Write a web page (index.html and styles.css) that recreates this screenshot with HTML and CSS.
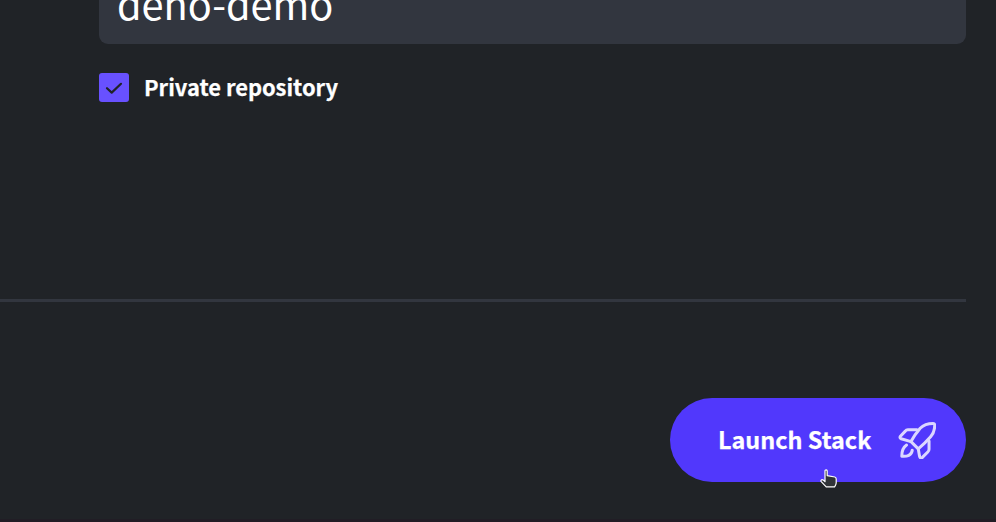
FILE: index.html
```html
<!DOCTYPE html>
<html lang="en">
<head>
<meta charset="utf-8">
<title>Launch Stack</title>
<link rel="stylesheet" href="styles.css">
</head>
<body>
<main class="page">
  <form class="fields">
    <div class="input"><span class="value">deno-demo</span></div>
    <label class="option">
      <span class="checkbox">
        <svg viewBox="0 0 30 30" width="30" height="30"><path d="M8 15.2 L12.7 19.6 L22 10.8"/></svg>
      </span>
      <span class="label">Private repository</span>
    </label>
  </form>
  <footer class="actions">
    <button class="launch" type="button">
      <span class="launch-text">Launch Stack</span>
      <svg class="rocket" viewBox="21 30 120 120" width="38" height="38">
        <path d="M62 95C68 84 79 67 91 53C105 39 119 38 132 38Q137 38 137 43C137 56 135 67 124 80C112 94 97 108 85 118Z"/>
        <path d="M81 58H52Q47 58 44 62L28 79Q26 84 31 86L62 95"/>
        <path d="M119 93V119Q119 124 115 128L98 145Q91 150 89 141L85 118"/>
        <path d="M48 106C36 114 33 126 33 141C49 143 65 138 66 122"/>
      </svg>
    </button>
    <svg class="pointer" viewBox="0 0 18 20" width="18" height="20">
      <path d="M5 1.8Q5 .8 6 .8T7.2 1.8V6.6L14.8 8Q16.2 8.4 16.2 10V14Q16 16 14.6 17.8H6.2L1.2 12.6Q.4 11.2 1.8 10.7Q3 10.4 5 12.7Z"/>
    </svg>
  </footer>
</main>
</body>
</html>
```

FILE: styles.css
```css
body {
  margin: 0;
  background: #202327;
  color: #fff;
  font-family: "Noto Sans CJK SC", "Noto Sans", sans-serif;
}

.page {
  box-sizing: border-box;
  display: flex;
  flex-direction: column;
  width: 996px;
  height: 522px;
  padding-right: 30px;
  overflow: hidden;
  border-bottom: 3px solid #211d25;
}

.fields {
  box-sizing: border-box;
  height: 299px;
  padding-left: 99px;
}

.input {
  display: flex;
  align-items: flex-end;
  box-sizing: border-box;
  height: 44px;
  padding: 0 18px 14px;
  border-radius: 0 0 9px 9px;
  background: #32363f;
}

.value {
  font-size: 39.7px;
  line-height: 54px;
  white-space: nowrap;
}

.option {
  display: flex;
  align-items: center;
  gap: 15px;
  height: 30px;
  margin-top: 28.5px;
}

.checkbox {
  width: 30px;
  height: 29px;
  border-radius: 3px;
  background: #6851ff;
}

.checkbox svg {
  display: block;
  fill: none;
  stroke: #202327;
  stroke-width: 2.2;
  stroke-linecap: round;
  stroke-linejoin: round;
}

.label {
  padding-bottom: 2px;
  font-size: 21.9px;
  line-height: 28px;
  font-weight: 700;
  -webkit-text-stroke: 0.25px #fff;
  white-space: nowrap;
}

.actions {
  position: relative;
  display: flex;
  justify-content: flex-end;
  padding-top: 96px;
  border-top: 3px solid #32363f;
}

.launch {
  display: flex;
  align-items: center;
  justify-content: space-between;
  box-sizing: border-box;
  width: 296px;
  height: 84px;
  padding: 0 30px 0 48px;
  border: 0;
  border-radius: 42px;
  background: #5138fc;
  color: #fff;
  font: inherit;
}

.launch-text {
  padding-bottom: 2px;
  font-size: 23.4px;
  line-height: 34px;
  font-weight: 700;
  -webkit-text-stroke: 0.25px #fff;
  white-space: nowrap;
}

.rocket {
  fill: none;
  stroke: #dcd7ff;
  stroke-width: 9.5;
  stroke-linecap: round;
  stroke-linejoin: round;
}

.pointer {
  position: absolute;
  top: 167px;
  left: 820px;
  fill: #303337;
  stroke: #fff;
  stroke-width: 1.2;
  stroke-linejoin: round;
}
```
